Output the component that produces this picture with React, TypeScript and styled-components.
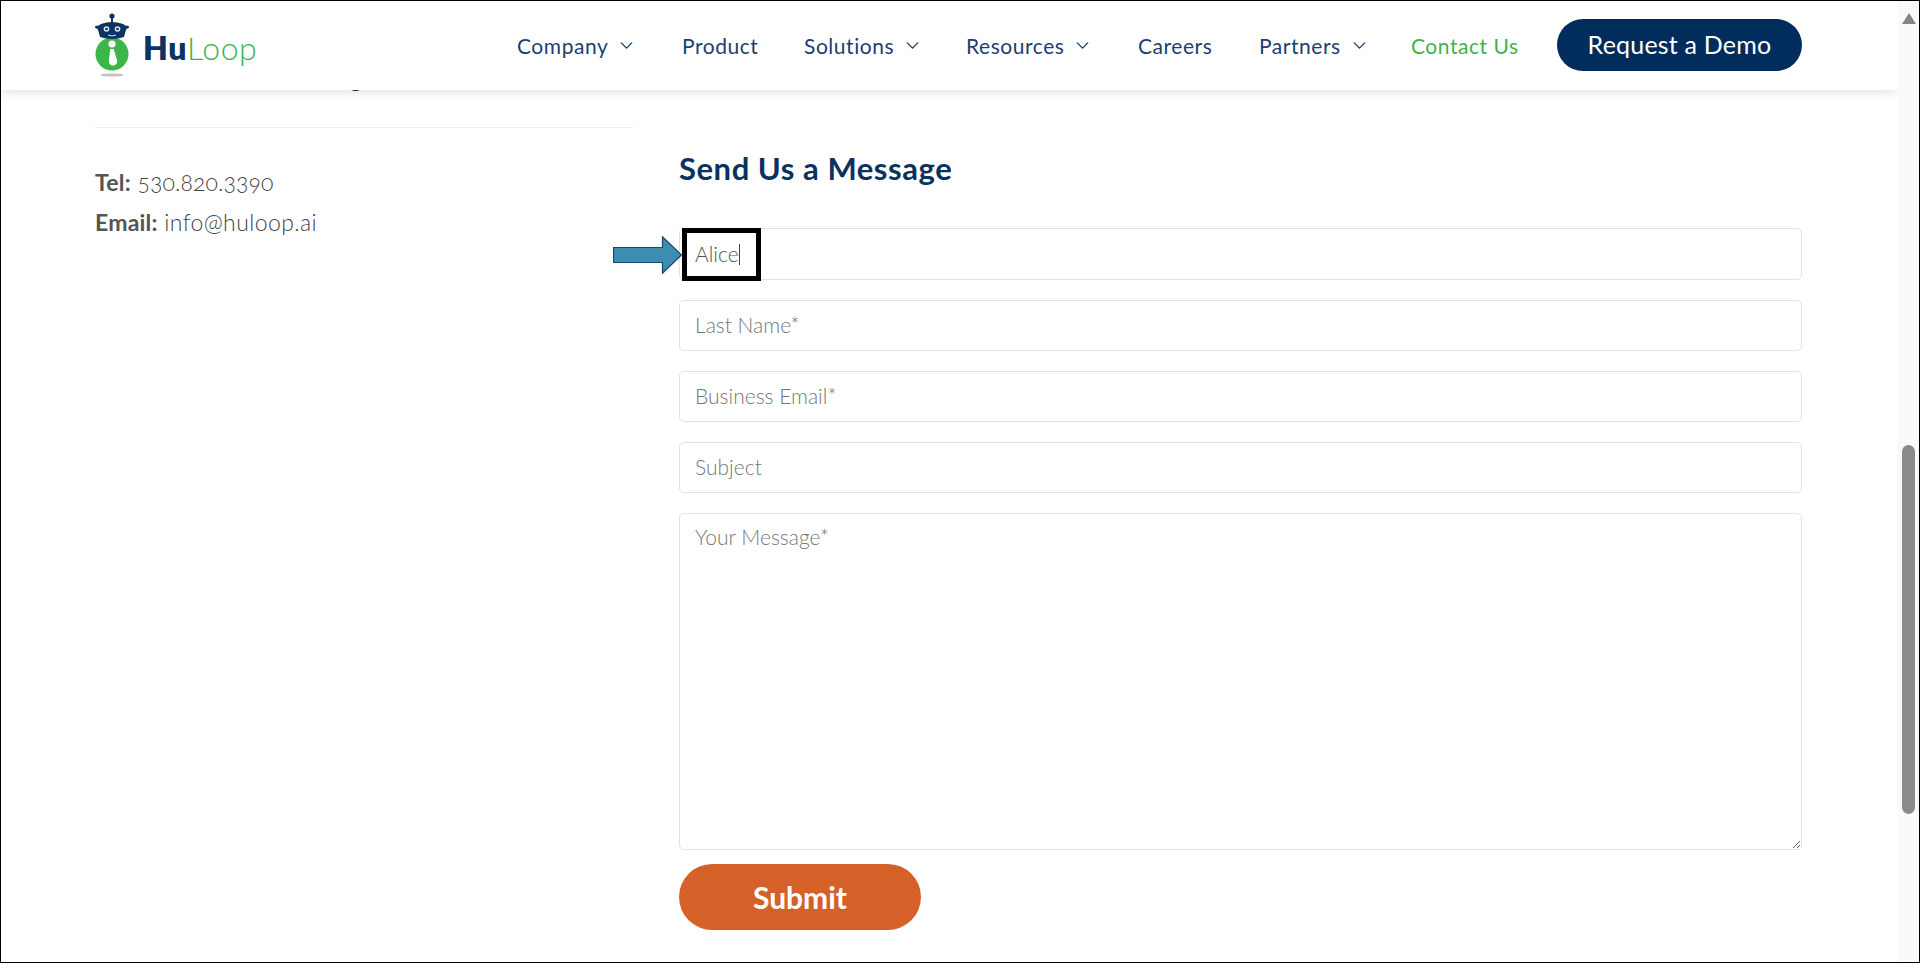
import styled, { createGlobalStyle } from 'styled-components';
import { ChevronDown } from 'lucide-react';

const Global = createGlobalStyle`
  * { box-sizing: border-box; }
  html, body { margin: 0; height: 100%; overflow: hidden; background: #fff; }
  body { font-family: 'Lato', 'Open Sans', sans-serif; }
`;

// 1px black frame round the whole capture
const Frame = styled.div`
  width: 1920px;
  height: 963px;
  border: 1px solid #000;
  display: flex;
  overflow: hidden;
`;

const Viewport = styled.div`
  position: relative;
  flex: 1;
  min-width: 0;
  overflow: hidden;
`;

const Header = styled.header`
  position: absolute;
  top: 0;
  left: 0;
  right: 0;
  height: 89px;
  padding: 0 95px 0 94px;
  background: #fff;
  box-shadow: 0 2px 10px rgba(0, 0, 0, 0.12);
  display: flex;
  align-items: center;
  justify-content: space-between;
  z-index: 2;
`;

const Logo = styled.div`
  display: flex;
  align-items: flex-start;
  gap: 10px;
  height: 89px;
`;

const LogoWord = styled.div`
  margin-top: 26px;
  font-size: 32px;
  line-height: 42px;
  color: #3cb54a;
  font-weight: 300;
  letter-spacing: 0.6px;

  b {
    color: #0d3360;
    font-weight: 800;
  }
`;

const Nav = styled.nav`
  display: flex;
  align-items: center;
`;

const NavItem = styled.a<{ $green?: boolean; $w: number }>`
  display: flex;
  align-items: center;
  width: ${(p) => p.$w}px;
  font-size: 21px;
  letter-spacing: 0.55px;
  color: ${(p) => (p.$green ? '#3cb54a' : '#1c3f6e')};
  white-space: nowrap;

  svg {
    margin-left: 8px;
  }
`;

const DemoButton = styled.button`
  width: 245px;
  height: 52px;
  margin-top: -2px;
  padding-bottom: 2px;
  border: 0;
  border-radius: 26px;
  background: #012d5c;
  color: #fff;
  font: 400 25px 'Lato', sans-serif;
  letter-spacing: 0.2px;
`;

const Main = styled.main`
  display: grid;
  grid-template-columns: 538px 1123px;
  column-gap: 46px;
  padding: 0 0 0 94px;
`;

const Side = styled.aside`
  color: #555;
  font-size: 23px;
`;

const HiddenLine = styled.div`
  height: 127px;
  padding: 65px 0 0 255px;
  font-size: 22px;
  line-height: 26px;
  color: #333;
  border-bottom: 1px solid #eee;
`;

const ContactList = styled.div`
  padding-top: 34px;
`;

const ContactLine = styled.p`
  margin: 0;
  height: 40px;
  line-height: 40px;
  font-weight: 300;
  letter-spacing: 0.4px;
  color: #444;

  b {
    font-weight: 700;
    color: #555;
    letter-spacing: 0.2px;
  }
`;

const OldNums = styled.span`
  font-feature-settings: 'onum';
  letter-spacing: 0.1px;
`;

const Form = styled.form`
  padding-top: 147px;
  display: flex;
  flex-direction: column;
  gap: 20px;
`;

const Heading = styled.h2`
  margin: 0;
  height: 60px;
  font-size: 31px;
  line-height: 41px;
  font-weight: 700;
  color: #0a3160;
  letter-spacing: 0.55px;
`;

const FieldWrap = styled.div`
  position: relative;
  height: 52px;
`;

const fieldCss = `
  display: block;
  width: 100%;
  border: 1px solid #e2e2e2;
  border-radius: 5px;
  padding: 0 15px;
  background: #fff;
  color: #555;
  font: 300 21px 'Lato', sans-serif;
  outline: none;

  &::placeholder {
    color: #777;
    opacity: 1;
  }
`;

const Field = styled.input`
  ${fieldCss}
  height: 51px;
  padding-bottom: 2px;
`;

const FirstField = styled(Field)`
  height: 52px;
`;

const MessageBox = styled.textarea`
  ${fieldCss}
  height: 337px;
  padding-top: 10px;
`;

const SubmitButton = styled.button`
  align-self: flex-start;
  width: 242px;
  height: 66px;
  margin-top: -6px;
  padding-bottom: 2px;
  border: 0;
  border-radius: 33px;
  background: #d56128;
  color: #fff;
  font: 700 30px 'Lato', sans-serif;
`;

// tutorial annotation: black box and arrow over the first field
const Highlight = styled.div`
  position: absolute;
  left: 3px;
  top: 0;
  width: 79px;
  height: 53px;
  border: 5px solid #000;
`;

const Caret = styled.i`
  position: absolute;
  left: 52px;
  top: 11px;
  width: 1px;
  height: 21px;
  background: #444;
`;

const PointerArrow = styled.svg`
  position: absolute;
  left: -66px;
  top: 8px;
`;

const Scrollbar = styled.div`
  position: relative;
  width: 22px;
  flex: none;
  background: #fafafa;
`;

const ScrollUp = styled.div`
  position: absolute;
  left: 5px;
  top: 12px;
  border-left: 7px solid transparent;
  border-right: 7px solid transparent;
  border-bottom: 11px solid #858585;
`;

const ScrollThumb = styled.div`
  position: absolute;
  left: 5px;
  top: 444px;
  width: 13px;
  height: 369px;
  border-radius: 7px;
  background: #8a8a8a;
`;

const navItems = [
  { label: 'Company', w: 165, caret: true },
  { label: 'Product', w: 122 },
  { label: 'Solutions', w: 162, caret: true },
  { label: 'Resources', w: 172, caret: true },
  { label: 'Careers', w: 121 },
  { label: 'Partners', w: 152, caret: true },
  { label: 'Contact Us', w: 146, green: true },
];

function LogoMark() {
  return (
    <svg width="38" height="80" viewBox="0 0 38 80" style={{ marginTop: 2 }}>
      <ellipse cx="17" cy="72" rx="12" ry="1.6" fill="#c4c4c4" />
      <circle cx="17" cy="51" r="16.5" fill="#3cb54a" />
      <circle cx="17" cy="41" r="3.6" fill="#fff" />
      <path d="M15.300 46h3.400l3.500 12q.4 2.500-2 4-2.200 1.200-4.400 0-2.400-1.500-2-4z" fill="#fff" />
      <circle cx="17" cy="13" r="2.600" fill="#0d3360" />
      <rect x="16" y="14" width="2" height="7" fill="#0d3360" />
      <path d="M6 21q11-4 22 0l5 3-2 3-2 7q-12 4-24 0l-2-7-2-3z" fill="#0d3360" />
      <circle cx="1.600" cy="24" r="1.600" fill="#0d3360" />
      <circle cx="32.400" cy="24" r="1.600" fill="#0d3360" />
      <circle cx="11.500" cy="26" r="2.800" fill="#dbe4ee" />
      <circle cx="22.500" cy="26" r="2.800" fill="#dbe4ee" />
      <circle cx="11.500" cy="26" r="1.300" fill="#0d3360" />
      <circle cx="22.500" cy="26" r="1.300" fill="#0d3360" />
      <path d="M13 32q4 2 8 0" stroke="#dbe4ee" strokeWidth="1" fill="none" />
    </svg>
  );
}

export default function App() {
  return (
    <Frame>
      <Global />
      <Viewport>
        <Header>
          <Logo>
            <LogoMark />
            <LogoWord>
              <b>Hu</b>Loop
            </LogoWord>
          </Logo>
          <Nav>
            {navItems.map((item) => (
              <NavItem key={item.label} $w={item.w} $green={item.green}>
                {item.label}
                {item.caret && <ChevronDown size={21} strokeWidth={1.6} />}
              </NavItem>
            ))}
            <DemoButton type="button">Request a Demo</DemoButton>
          </Nav>
        </Header>

        <Main>
          <Side>
            <HiddenLine>g</HiddenLine>
            <ContactList>
              <ContactLine>
                <b>Tel:</b> <OldNums>530.820.3390</OldNums>
              </ContactLine>
              <ContactLine>
                <b>Email:</b> info@huloop.ai
              </ContactLine>
            </ContactList>
          </Side>

          <Form onSubmit={(e) => e.preventDefault()}>
            <Heading>Send Us a Message</Heading>
            <FieldWrap>
              <FirstField defaultValue="Alice" placeholder="First Name*" />
              <PointerArrow width="70" height="38" viewBox="0 0 70 38">
                <path
                  d="M.5 11.500h49V.8L68.500 19 49.500 37.200V26.500H.5z"
                  fill="#3f8cb1"
                  stroke="#17466e"
                  strokeWidth="1.200"
                />
              </PointerArrow>
              <Highlight>
                <Caret />
              </Highlight>
            </FieldWrap>
            <Field placeholder="Last Name*" />
            <Field placeholder="Business Email*" />
            <Field placeholder="Subject" />
            <MessageBox placeholder="Your Message*" />
            <SubmitButton type="submit">Submit</SubmitButton>
          </Form>
        </Main>
      </Viewport>
      <Scrollbar>
        <ScrollUp />
        <ScrollThumb />
      </Scrollbar>
    </Frame>
  );
}
